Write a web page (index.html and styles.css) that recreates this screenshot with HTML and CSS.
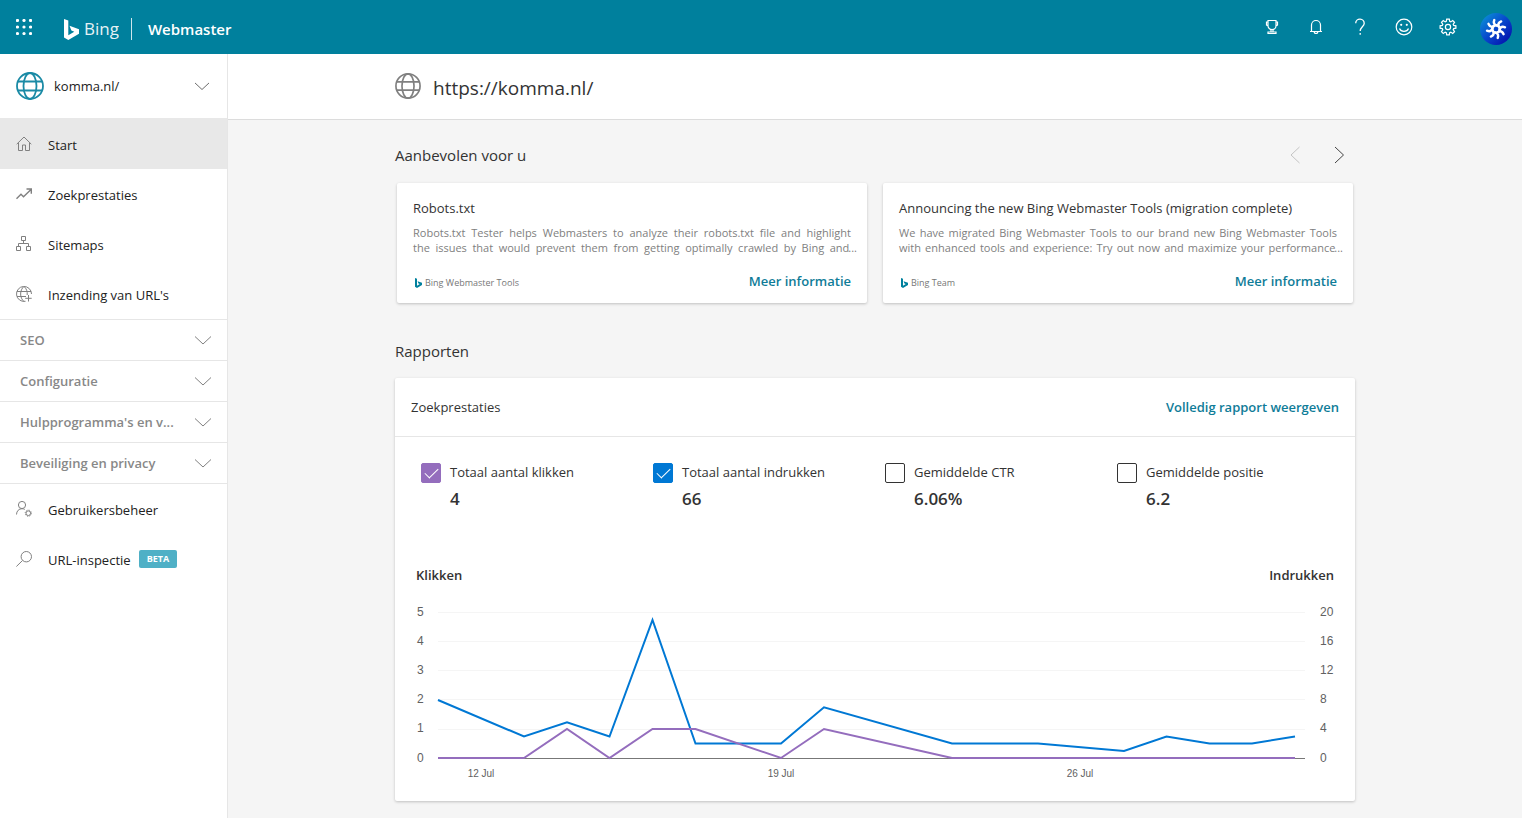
FILE: index.html
```html
<!DOCTYPE html>
<html lang="nl">
<head>
<meta charset="utf-8">
<meta name="viewport" content="width=device-width, initial-scale=1">
<title>Bing Webmaster</title>
<link rel="stylesheet" href="styles.css">
</head>
<body>
<svg class="sprite" width="0" height="0" aria-hidden="true">
  <symbol id="chevron" viewBox="0 0 16 16"><path d="M0 4.500l8 7.500 8-7.500"/></symbol>
  <symbol id="globe" viewBox="0 0 28 28"><circle cx="14" cy="14" r="13"/><ellipse cx="14" cy="14" rx="6.500" ry="13"/><path d="M14 1v26M2 9.500h24M2 18.500h24"/></symbol>
  <symbol id="bing" viewBox="0 0 15 21"><path d="M0 0l4.300 1.500v14.800l6-3.500-2.900-1.400-1.900-4.600L15 10.200v4.500L4.300 21 0 18.600z"/></symbol>
</svg>

<header class="topbar">
  <button class="icon-btn waffle" aria-label="Apps">
    <svg width="16" height="16" viewBox="0 0 16 16"><g fill="#fff"><circle cx="1.500" cy="1.500" r="1.600"/><circle cx="8" cy="1.500" r="1.600"/><circle cx="14.500" cy="1.500" r="1.600"/><circle cx="1.500" cy="8" r="1.600"/><circle cx="8" cy="8" r="1.600"/><circle cx="14.500" cy="8" r="1.600"/><circle cx="1.500" cy="14.500" r="1.600"/><circle cx="8" cy="14.500" r="1.600"/><circle cx="14.500" cy="14.500" r="1.600"/></g></svg>
  </button>
  <a class="brand" href="#"><svg class="brand-logo" width="15" height="21"><use href="#bing"/></svg><span class="brand-name">Bing</span></a>
  <a class="product" href="#">Webmaster</a>
  <div class="actions">
    <button class="icon-btn" aria-label="Prestaties"><svg width="18" height="18" viewBox="0 0 18 18" class="line"><path d="M5 2.500h8v5.500a4 3.500 0 0 1-8 0zM5 4H3.500v3l2 1.500M13 4h1.500v3l-2 1.500M8 11.500v2.500M10 11.500v2.500M5 15.500v-1.500h8v1.500z"/></svg></button>
    <button class="icon-btn" aria-label="Meldingen"><svg width="18" height="18" viewBox="0 0 18 18" class="line"><path d="M4.500 13.500V7a4.500 4.500 0 0 1 9 0v6.500M3 13.500h12M7.200 13.500a1.800 2 0 0 0 3.600 0"/></svg></button>
    <button class="icon-btn" aria-label="Help"><svg width="18" height="18" viewBox="0 0 18 18" class="line"><path d="M4.700 5.200a4.200 4.200 0 0 1 8.500 0.300c0 3-4 3.800-4 7.500M9.200 15v1.700" stroke-width="1.300"/></svg></button>
    <button class="icon-btn" aria-label="Feedback"><svg width="18" height="18" viewBox="0 0 18 18" class="line"><circle cx="9" cy="9" r="7.800"/><circle cx="6.200" cy="6.800" r="1.100" fill="#fff" stroke="none"/><circle cx="11.800" cy="6.800" r="1.100" fill="#fff" stroke="none"/><path d="M4.500 10.500a4.800 4.300 0 0 0 9 0"/></svg></button>
    <button class="icon-btn" aria-label="Instellingen"><svg width="18" height="18" viewBox="0 0 18 18" class="line"><path d="M7.700 1.200h2.600l.4 2.200 1.100.5 1.900-1.300 1.800 1.800-1.300 1.900.5 1.100 2.200.4v2.400l-2.200.4-.5 1.100 1.300 1.900-1.800 1.800-1.900-1.300-1.100.5-.4 2.200H7.700l-.4-2.200-1.100-.5-1.900 1.300-1.800-1.800 1.300-1.900-.5-1.100-2.200-.4V7.800l2.200-.4.5-1.100-1.300-1.900 1.800-1.800 1.900 1.300 1.100-.5z"/><circle cx="9" cy="9" r="2.600"/></svg></button>
    <button class="icon-btn avatar" aria-label="Account">
      <svg width="32" height="32" viewBox="0 0 32 32">
        <defs><linearGradient id="av" x1="0" y1="0" x2="1" y2="1"><stop offset="0.100" stop-color="#0a8bd6"/><stop offset="0.500" stop-color="#0846cc"/><stop offset="0.900" stop-color="#0512ad"/></linearGradient>
        <path id="blade" d="M16.500 12.500C14 11.500 13.300 9.500 14.300 7"/></defs>
        <circle cx="16" cy="16" r="16" fill="url(#av)"/>
        <g fill="none" stroke="#fff" stroke-width="2.400" stroke-linecap="round"><use href="#blade"/><use href="#blade" transform="rotate(45 16 16)"/><use href="#blade" transform="rotate(90 16 16)"/><use href="#blade" transform="rotate(135 16 16)"/><use href="#blade" transform="rotate(180 16 16)"/><use href="#blade" transform="rotate(225 16 16)"/><use href="#blade" transform="rotate(270 16 16)"/><use href="#blade" transform="rotate(315 16 16)"/><circle cx="16" cy="16" r="3.700"/></g>
      </svg>
    </button>
  </div>
</header>

<div class="shell">
  <nav class="sidebar">
    <button class="site-picker">
      <svg class="site-globe" width="28" height="28" viewBox="0 0 28 28"><circle cx="14" cy="14" r="13"/><ellipse cx="14" cy="14" rx="6.500" ry="13"/><path d="M2 9.500h24M2 18.500h24"/></svg>
      <span class="grow">komma.nl/</span>
      <svg class="chevron dark" width="14" height="14"><use href="#chevron"/></svg>
    </button>
    <div class="nav-top">
      <a class="nav-item active" href="#"><svg class="nav-icon" viewBox="0 0 16 16"><path d="M0.700 8.200L8 1l7.300 7.200M2.500 6.800v7.700h4V9h3v5.500h4V6.800"/></svg>Start</a>
      <a class="nav-item" href="#"><svg class="nav-icon" viewBox="0 0 16 16"><path d="M0.500 12.800l4.500-4.500 2.500 2.500L15 3.500M10.500 3H15.300v4.800" stroke-width="1.400"/></svg>Zoekprestaties</a>
      <a class="nav-item" href="#"><svg class="nav-icon" viewBox="0 0 16 16"><path d="M5.500 .5h4v4h-4zM.5 10.500h4v4h-4zM10.500 10.500h4v4h-4zM7.500 4.500v3M2.500 10.500v-3h10v3"/></svg>Sitemaps</a>
      <a class="nav-item" href="#"><svg class="nav-icon" viewBox="0 0 16 16"><path d="M15.500 8A7.500 7.500 0 1 0 9.500 15.300M1 5.500h14M1 10.500h9M8 .5C3.500 4 3.500 12 8 15.500M8 .5c2.500 2 3.500 5 3.200 8.500M12.500 9v6.500M9.200 12.300h6.500"/></svg>Inzending van URL's</a>
    </div>
    <button class="group"><span class="grow">SEO</span><svg class="chevron" width="16" height="16"><use href="#chevron"/></svg></button>
    <button class="group"><span class="grow">Configuratie</span><svg class="chevron" width="16" height="16"><use href="#chevron"/></svg></button>
    <button class="group"><span class="grow">Hulpprogramma's en v...</span><svg class="chevron" width="16" height="16"><use href="#chevron"/></svg></button>
    <button class="group"><span class="grow">Beveiliging en privacy</span><svg class="chevron" width="16" height="16"><use href="#chevron"/></svg></button>
    <div class="nav-foot">
      <a class="nav-item" href="#"><svg class="nav-icon" viewBox="0 0 16 16"><circle cx="6" cy="4" r="3.600"/><path d="M.5 13.500C.5 10 3 7.700 6 7.700c1 0 2 .3 2.700.8"/><circle cx="12.300" cy="12.200" r="2.300"/><circle cx="12.300" cy="12.200" r="3.100" stroke-dasharray="1.200 1.230"/></svg>Gebruikersbeheer</a>
      <a class="nav-item" href="#"><svg class="nav-icon" viewBox="0 0 16 16"><circle cx="10.300" cy="5.700" r="5.200"/><path d="M6.500 9.500L.4 15.500"/></svg>URL-inspectie<span class="badge">BETA</span></a>
    </div>
  </nav>

  <main class="main">
    <div class="page-head">
      <div class="wrap page-title">
        <svg class="page-globe" width="26" height="26" viewBox="0 0 28 28"><circle cx="14" cy="14" r="13"/><ellipse cx="14" cy="14" rx="6.500" ry="13"/><path d="M2 9.500h24M2 18.500h24"/></svg>
        <h1>https://komma.nl/</h1>
      </div>
    </div>
    <div class="wrap">
      <div class="section-head">
        <h2>Aanbevolen voor u</h2>
        <button class="arrow off" aria-label="Vorige" disabled><svg width="32" height="20" viewBox="0 0 32 20"><path d="M20.500 2l-8.500 8 8.500 8"/></svg></button>
        <button class="arrow" aria-label="Volgende"><svg width="32" height="20" viewBox="0 0 32 20"><path d="M12 2l8.500 8-8.500 8"/></svg></button>
      </div>
      <div class="tips">
        <article class="tip">
          <h3>Robots.txt</h3>
          <p>Robots.txt Tester helps Webmasters to analyze their robots.txt file and highlight<br>the issues that would prevent them from getting optimally crawled by Bing and<span class="more">...</span></p>
          <div class="tip-foot"><svg class="tip-logo" width="7" height="10"><use href="#bing"/></svg><span class="source">Bing Webmaster Tools</span><a class="link" href="#">Meer informatie</a></div>
        </article>
        <article class="tip">
          <h3>Announcing the new Bing Webmaster Tools (migration complete)</h3>
          <p>We have migrated Bing Webmaster Tools to our brand new Bing Webmaster Tools<br>with enhanced tools and experience: Try out now and maximize your performance<span class="more">...</span></p>
          <div class="tip-foot"><svg class="tip-logo" width="7" height="10"><use href="#bing"/></svg><span class="source">Bing Team</span><a class="link" href="#">Meer informatie</a></div>
        </article>
      </div>
      <h2 class="reports-title">Rapporten</h2>
      <section class="report">
        <div class="report-head"><h3>Zoekprestaties</h3><a class="link" href="#">Volledig rapport weergeven</a></div>
        <div class="metrics">
          <div class="metric"><input class="check purple" type="checkbox" id="m1" checked><label for="m1">Totaal aantal klikken</label><strong>4</strong></div>
          <div class="metric"><input class="check" type="checkbox" id="m2" checked><label for="m2">Totaal aantal indrukken</label><strong>66</strong></div>
          <div class="metric"><input class="check" type="checkbox" id="m3"><label for="m3">Gemiddelde CTR</label><strong>6.06%</strong></div>
          <div class="metric"><input class="check" type="checkbox" id="m4"><label for="m4">Gemiddelde positie</label><strong>6.2</strong></div>
        </div>
        <div class="axis-titles"><span>Klikken</span><span>Indrukken</span></div>
        <svg class="chart" viewBox="0 0 960 200" role="img" aria-label="Klikken en indrukken per dag">
          <path class="grid" d="M43 11.500h867M43 40.500h867M43 69.500h867M43 98.500h867M43 128.500h867"/>
          <path class="base" d="M43 157.500h867"/>
          <polyline class="impressions" points="43,99 129,135.500 172,121.200 214.500,135.500 257.500,19 300.500,142.500 386,142.500 429,106.300 557,142.500 643,142.500 729,150 771.500,135.500 814.500,142.500 857,142.500 900,135.500"/>
          <polyline class="clicks" points="43,157 129,157 172,128 214.500,157 257.500,128 300.500,128 386,157 429,128 557,157 900,157"/>
          <g class="tick"><text x="22" y="15">5</text><text x="22" y="44">4</text><text x="22" y="73">3</text><text x="22" y="102">2</text><text x="22" y="131">1</text><text x="22" y="161">0</text>
          <text x="925" y="15">20</text><text x="925" y="44">16</text><text x="925" y="73">12</text><text x="925" y="102">8</text><text x="925" y="131">4</text><text x="925" y="161">0</text></g>
          <g class="date"><text x="86" y="176">12 Jul</text><text x="386" y="176">19 Jul</text><text x="685" y="176">26 Jul</text></g>
        </svg>
      </section>
    </div>
  </main>
</div>
</body>
</html>
```
FILE: styles.css
```css
* { box-sizing: border-box; }
body {
  margin: 0;
  min-height: 100vh;
  display: flex;
  flex-direction: column;
  background: #f5f5f5;
  color: #333;
  font: 13px/20px "Open Sans", "Noto Sans", sans-serif;
}
h1, h2, h3, p { margin: 0; font-weight: 400; }
a { color: inherit; text-decoration: none; }
button { border: 0; padding: 0; background: none; color: inherit; font: inherit; text-align: left; cursor: pointer; }
svg { display: block; flex: none; }
.sprite { position: absolute; }
.grow { flex: 1; }

.topbar {
  display: flex;
  align-items: center;
  height: 54px;
  padding: 4px 10px 0 16px;
  background: #00809d;
  color: #fff;
}
.waffle { margin: 0 32px 4px 0; }
.brand { display: flex; align-items: center; gap: 5px; }
.brand-logo { fill: #fff; }
.brand-name { font-size: 17px; line-height: 22px; opacity: 0.9; }
.product {
  margin-left: 12px;
  padding-left: 16px;
  border-left: 1px solid #cfe6ec;
  font-size: 15px;
  font-weight: 600;
  line-height: 22px;
}
.actions { display: flex; align-items: center; gap: 26px; margin-left: auto; }
.actions .icon-btn { margin-bottom: 4px; }
.actions .avatar { margin: 0 0 0 -3px; }
.line { fill: none; stroke: #fff; stroke-width: 1.2; }

.shell { flex: 1; display: flex; }
.sidebar {
  flex: none;
  width: 228px;
  border-right: 1px solid #e6e6e6;
  background: #fff;
  color: #222;
}
.site-picker { display: flex; align-items: center; gap: 10px; width: 100%; height: 64px; padding: 0 18px 0 16px; }
.site-globe { fill: none; stroke: #1a8aa5; stroke-width: 1.8; }
.chevron { fill: none; stroke: #808080; stroke-width: 1; }
.chevron.dark { stroke: #555; }
.nav-item { display: flex; align-items: center; height: 50px; padding-left: 16px; }
.nav-top .nav-item { padding-top: 2px; }
.nav-top .active { height: 51px; background: #e8e8e8; }
.nav-icon { width: 16px; height: 16px; margin: 0 16px 2px 0; fill: none; stroke: #808080; stroke-width: 1; }
.group {
  display: flex;
  align-items: center;
  width: 100%;
  height: 41px;
  padding: 0 16px 0 20px;
  border-top: 1px solid #e6e6e6;
  color: #888;
  font-weight: 600;
}
.nav-foot { padding-top: 1px; border-top: 1px solid #e6e6e6; }
.badge {
  margin: 0 0 2px 8px;
  padding: 0 8px;
  border-radius: 2px;
  background: #4fb0c6;
  color: #fff;
  font-size: 9px;
  font-weight: 700;
  line-height: 18px;
}

.main { flex: 1; min-width: 0; }
.page-head { border-bottom: 1px solid #dcdcdc; background: #fff; }
.wrap { max-width: 960px; margin: 0 auto; }
.page-title { display: flex; align-items: center; gap: 12px; height: 65px; }
.page-globe { margin-bottom: 2px; fill: none; stroke: #808080; stroke-width: 1.8; }
h1 { margin-top: 2px; font-size: 19px; line-height: 28px; }
h2 { flex: 1; font-size: 15px; line-height: 20px; }
h3 { font-size: 13px; line-height: 20px; }
.section-head { display: flex; align-items: center; gap: 12px; padding: 25px 0 18px; }
.arrow svg { fill: none; stroke: #444; stroke-width: 1; }
.arrow.off svg { stroke: #c4c4c4; }

.tips { display: grid; grid-template-columns: 1fr 1fr; gap: 16px; padding: 0 2px; }
.tip { padding: 15px 16px 12px; border-radius: 2px; background: #fff; box-shadow: 0 1px 3px rgba(0, 0, 0, 0.22); }
.tip p { margin-top: 7px; color: #808080; font-size: 11px; line-height: 15px; text-align: justify; text-align-last: justify; }
.more { margin: 0 -6px 0 -1px; }
.tip-foot { display: flex; align-items: center; gap: 3px; margin-top: 16px; padding-left: 2px; color: #777; font-size: 9px; }
.tip-logo { margin-top: 4px; fill: #00809d; }
.source { flex: 1; padding-top: 4px; line-height: 14px; }
.link { color: #0f7c98; font-size: 13px; font-weight: 600; }

.reports-title { margin: 38px 0 17px; }
.report { border-radius: 2px; background: #fff; box-shadow: 0 1px 3px rgba(0, 0, 0, 0.22); }
.report-head { display: flex; align-items: center; justify-content: space-between; height: 59px; padding: 0 16px; border-bottom: 1px solid #e6e6e6; }
.metrics { display: grid; grid-template-columns: repeat(4, 1fr); padding: 26px 6px 0 26px; }
.metric { display: grid; grid-template-columns: 20px 1fr; column-gap: 9px; align-items: center; }
.metric label { padding-bottom: 2px; line-height: 18px; }
.metric strong { grid-column: 2; font-size: 17px; font-weight: 600; line-height: 32px; }
.check { appearance: none; width: 20px; height: 20px; margin: 0; border: 1px solid #333; border-radius: 2px; background: #fff; }
.check:checked { display: grid; place-items: center; border-color: #0078d4; background: #0078d4; }
.check:checked::before { content: ""; width: 12px; height: 6px; margin-bottom: 4px; border: solid #fff; border-width: 0 0 1px 1px; transform: rotate(-45deg); }
.check.purple:checked { border-color: #946dbd; background: #946dbd; }
.axis-titles { display: flex; justify-content: space-between; padding: 50px 21px 0; font-weight: 600; }
.chart { width: 100%; height: auto; margin-top: 16px; }
.grid { stroke: #f5f5f5; }
.base { stroke: #777; }
.impressions, .clicks { fill: none; stroke-width: 2; }
.impressions { stroke: #0078d4; }
.clicks { stroke: #946dbd; }
.tick, .date { fill: #616161; font-family: "Liberation Sans", Arial, sans-serif; }
.tick { font-size: 12px; }
.date { font-size: 10px; text-anchor: middle; }
```
